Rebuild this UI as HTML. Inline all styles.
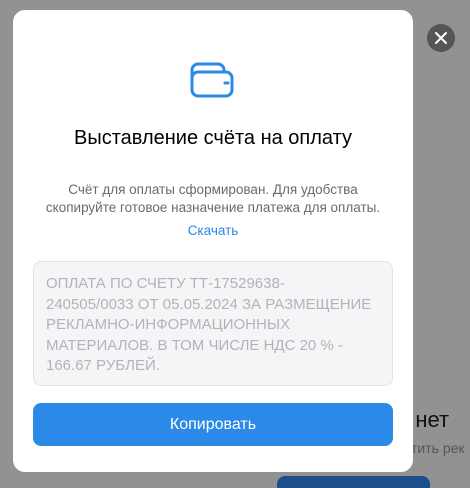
<!DOCTYPE html>
<html style="overflow:hidden"><head><meta charset="utf-8"><style>
html,body{margin:0;width:470px;height:488px;overflow:hidden}
body{background:#929292;position:relative;font-family:"Liberation Sans",sans-serif}
.bg1{position:absolute;left:397px;top:407px;font-size:22px;color:#111}
.bg2{position:absolute;left:411px;top:440px;font-size:14px;color:#555;white-space:nowrap}
.bgbtn{position:absolute;left:277px;top:476px;width:153px;height:12px;background:#1c4f8a;border-radius:8px 8px 0 0}
.close{position:absolute;left:427px;top:24px;width:28px;height:28px;border-radius:50%;background:#555}
.modal{position:absolute;left:13px;top:10px;width:400px;height:462px;background:#fff;border-radius:12px}
.t{position:absolute;left:0;width:400px;text-align:center}
.ta{position:absolute;left:20px;top:251px;width:334px;height:100px;padding:12px 12px 11px;background:#f5f5f7;border:1px solid #e4e4e8;border-radius:8px;color:#b3b3b8;font-size:15px;line-height:20.5px;white-space:nowrap}
.btn{position:absolute;left:20px;top:393px;width:360px;height:43px;background:#2b8ae8;border-radius:8px;color:#fff;font-size:16px;text-align:center;line-height:43px}
</style></head><body>
<div class="bg1">а нет</div>
<div class="bg2">тить рек</div>
<div class="bgbtn"></div>
<div class="close"><svg width="28" height="28"><path d="M9 9L19 19M19 9L9 19" stroke="#fff" stroke-width="2" stroke-linecap="round"/></svg></div>
<div class="modal">
<svg style="position:absolute;left:175px;top:44px" width="50" height="46"><path d="M4 25V16a6 6 0 0 1 6-6h20a6 6 0 0 1 6 6v2" fill="none" stroke="#2b8ae8" stroke-width="3"/><rect x="4" y="18" width="40" height="24" rx="6" fill="none" stroke="#2b8ae8" stroke-width="3"/><path d="M37 29h3" stroke="#2b8ae8" stroke-width="3" stroke-linecap="round"/></svg>
<div class="t" style="top:117px;font-size:20px;color:#000">Выставление счёта на оплату</div>
<div class="t" style="top:171px;font-size:13.5px;line-height:18px;color:#6a6a6a">Счёт для оплаты сформирован. Для удобства<br>скопируйте готовое назначение платежа для оплаты.</div>
<div class="t" style="top:213px;font-size:13.5px;color:#2b8ae8">Скачать</div>
<div class="ta">ОПЛАТА ПО СЧЕТУ ТТ-17529638-<br>240505/0033 ОТ 05.05.2024 ЗА РАЗМЕЩЕНИЕ<br>РЕКЛАМНО-ИНФОРМАЦИОННЫХ<br>МАТЕРИАЛОВ. В ТОМ ЧИСЛЕ НДС 20 % -<br>166.67 РУБЛЕЙ.</div>
<div class="btn">Копировать</div>
</div>
</body></html>
